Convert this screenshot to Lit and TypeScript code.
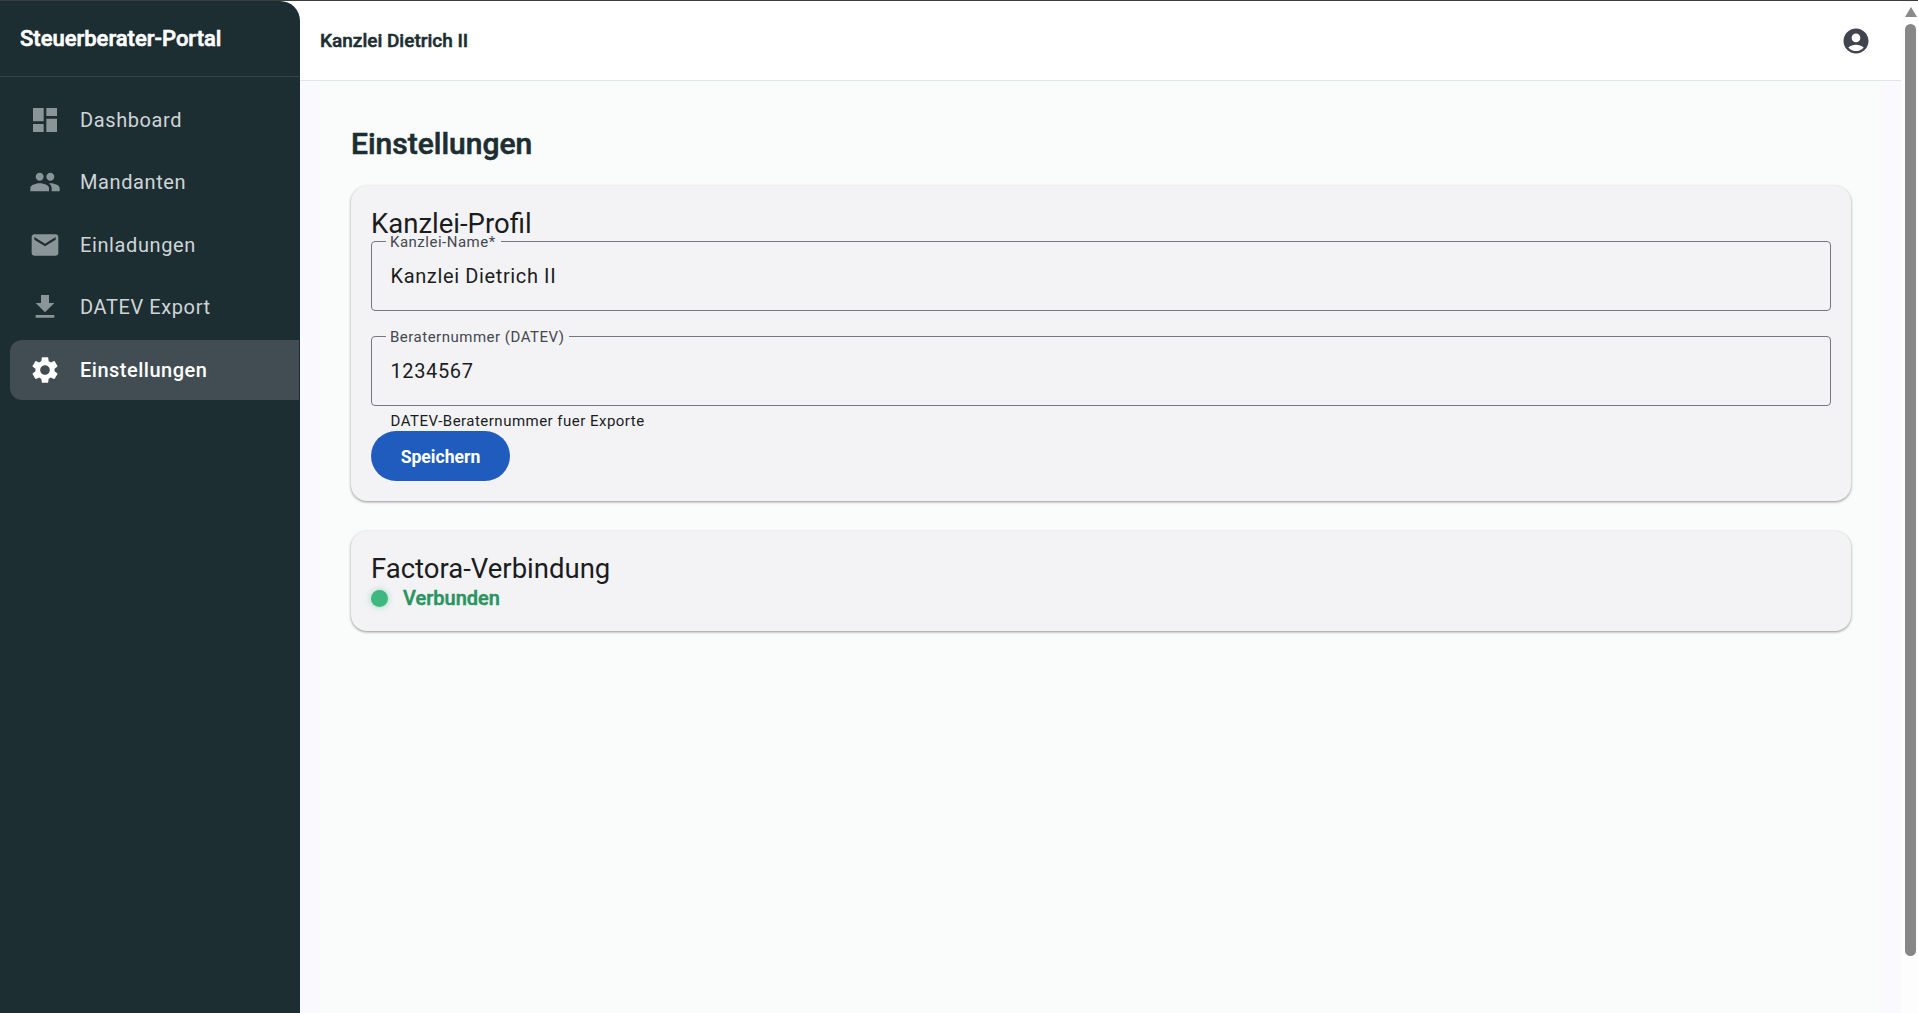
import { LitElement, html, css, svg } from "lit";
import { customElement } from "lit/decorators.js";

const icons: Record<string, string> = {
  dashboard: "M3 13h8V3H3v10zm0 8h8v-6H3v6zm10 0h8V11h-8v10zm0-18v6h8V3h-8z",
  people: "M16 11c1.66 0 2.99-1.34 2.99-3S17.66 5 16 5c-1.66 0-3 1.34-3 3s1.34 3 3 3zm-8 0c1.66 0 2.99-1.34 2.99-3S9.66 5 8 5C6.34 5 5 6.34 5 8s1.34 3 3 3zm0 2c-2.33 0-7 1.17-7 3.5V19h14v-2.5c0-2.33-4.67-3.5-7-3.5zm8 0c-.29 0-.62.02-.97.05 1.16.84 1.97 1.97 1.97 3.45V19h6v-2.5c0-2.33-4.67-3.5-7-3.5z",
  mail: "M20 4H4c-1.1 0-1.99.9-1.99 2L2 18c0 1.1.9 2 2 2h16c1.1 0 2-.9 2-2V6c0-1.1-.9-2-2-2zm0 4l-8 5-8-5V6l8 5 8-5v2z",
  download: "M19 9h-4V3H9v6H5l7 7 7-7zM5 18v2h14v-2H5z",
  settings: "M19.14 12.94c.04-.3.06-.61.06-.94 0-.32-.02-.64-.07-.94l2.03-1.58c.18-.14.23-.41.12-.61l-1.92-3.32c-.12-.22-.37-.29-.59-.22l-2.39.96c-.5-.38-1.03-.7-1.62-.94l-.36-2.54c-.04-.24-.24-.41-.48-.41h-3.84c-.24 0-.43.17-.47.41l-.36 2.54c-.59.24-1.13.57-1.62.94l-2.39-.96c-.22-.08-.47 0-.59.22L2.74 8.87c-.12.21-.08.47.12.61l2.03 1.58c-.05.3-.09.63-.09.94s.02.64.07.94l-2.03 1.58c-.18.14-.23.41-.12.61l1.92 3.32c.12.22.37.29.59.22l2.39-.96c.5.38 1.03.7 1.62.94l.36 2.54c.05.24.24.41.48.41h3.84c.24 0 .44-.17.47-.41l.36-2.54c.59-.24 1.13-.56 1.62-.94l2.39.96c.22.08.47 0 .59-.22l1.92-3.32c.12-.22.07-.47-.12-.61l-2.01-1.58zM12 15.6c-1.98 0-3.6-1.62-3.6-3.6s1.62-3.6 3.6-3.6 3.6 1.62 3.6 3.6-1.62 3.6-3.6 3.6z",
  account: "M12 2C6.48 2 2 6.48 2 12s4.48 10 10 10 10-4.48 10-10S17.52 2 12 2zm0 4c1.93 0 3.5 1.57 3.5 3.5S13.93 13 12 13s-3.5-1.57-3.5-3.5S10.07 6 12 6zm0 14c-2.03 0-4.43-.82-6.14-2.88C7.55 15.8 9.68 15 12 15s4.45.8 6.14 2.12C16.43 19.18 14.03 20 12 20z",
};

const icon = (name: string) => svg`<svg viewBox="0 0 24 24"><path d=${icons[name]}></path></svg>`;

@customElement("app-root")
export class AppRoot extends LitElement {
  static styles = css`
    :host { display: block; font-family: Roboto, "Liberation Sans", sans-serif; }
    * { box-sizing: border-box; }
    .page { height: 1013px; display: flex; flex-direction: column; overflow: hidden; background: #fff; }
    .topline { height: 1px; background: #3c3c3c; flex: none; }
    .frame { flex: 1; display: flex; min-height: 0; }
    .sidebar { width: 300px; flex: none; background: #1d2e33; border-top-right-radius: 20px; display: flex; flex-direction: column; }
    .brand { height: 76px; flex: none; border-bottom: 1px solid #33444a; padding-left: 20px; display: flex; align-items: center; color: #fff; font-size: 22px; font-weight: 500; -webkit-text-stroke: 0.6px #fff; }
    nav { display: flex; flex-direction: column; gap: 2.6px; padding-top: 12.5px; padding-left: 10px; }
    .item { height: 60px; display: flex; align-items: center; color: #cfd5d7; font-size: 20px; letter-spacing: 0.6px; border-radius: 12px 0 0 12px; padding-left: 19px; }
    .item svg { width: 32px; height: 32px; fill: #8a9598; flex: none; margin-right: 19px; }
    .item.active { background: #414d52; color: #fff; font-weight: 500; letter-spacing: 0.5px; margin-right: 1px; }
    .item.active svg { fill: #fff; }
    .main { flex: 1; min-width: 0; display: flex; flex-direction: column; background: #f9f9fe; }
    header { height: 80px; flex: none; background: #fff; border-bottom: 1px solid #dfe6ea; display: flex; align-items: center; justify-content: space-between; padding: 0 30px 0 20px; font-size: 19px; font-weight: 500; -webkit-text-stroke: 0.5px #1d2e33; color: #1d2e33; }
    header svg { width: 30px; height: 30px; fill: #3f444d; display: block; -webkit-text-stroke: 0; }
    .content { flex: 1; margin: 0 20px; background: #fafcfc; padding: 44px 30px 0 31px; display: flex; flex-direction: column; }
    h1 { margin: 0; font-size: 30px; line-height: 38px; font-weight: 500; -webkit-text-stroke: 0.6px #1d2e33; color: #1d2e33; }
    .card { background: #f3f3f6; border-radius: 16px; box-shadow: 0 1px 3px rgba(0,0,0,.35), 0 1px 2px rgba(0,0,0,.1); padding: 20px; }
    .card.profile { margin-top: 23px; height: 315px; }
    .card.factora { margin-top: 30px; height: 100px; }
    h2 { margin: 0; font-size: 27.5px; line-height: 34px; font-weight: 400; color: #1a1c1e; }
    .profile h2 { margin-top: 1px; }
    .factora h2 { margin-top: 1px; line-height: 33px; }
    .field { position: relative; height: 70px; border: 1px solid #74777f; border-radius: 4px; display: flex; align-items: center; padding: 0 18.5px; font-size: 20px; letter-spacing: 0.63px; color: #1a1c1e; }
    .field + .field { margin-top: 25px; }
    .label { position: absolute; left: 14px; top: -9.5px; background: #f3f3f6; padding: 0 5px 0 4px; line-height: 18px; font-size: 15px; letter-spacing: 0.5px; color: #44474f; }
    .help { font-size: 15px; line-height: 24px; letter-spacing: 0.48px; color: #1a1c1e; padding-left: 19.5px; margin-top: 3px; }
    button { display: block; width: 139px; height: 50px; border: 0; border-radius: 25px; background: #205cbe; color: #fff; font: 700 17.6px Roboto, sans-serif; padding: 1px 0 0; margin-top: -2px; }
    .status { display: flex; align-items: center; gap: 15px; color: #2a9460; font-size: 20px; font-weight: 500; -webkit-text-stroke: 0.5px #2a9460; line-height: 26px; }
    .dot { width: 17px; height: 17px; border-radius: 50%; background: #3eb87e; box-shadow: 0 0 6px rgba(62,184,126,.5); }
    .scrollbar { width: 17px; flex: none; background: #fdfdfd; display: flex; flex-direction: column; align-items: center; }
    .arrow { width: 0; height: 0; border-left: 6.5px solid transparent; border-right: 6.5px solid transparent; border-bottom: 10px solid #8a8a8a; margin-top: 6px; margin-left: 2px; }
    .thumb { width: 11px; height: 932px; border-radius: 5.5px; background: #878787; margin-top: 7px; margin-left: 2px; }
  `;

  render() {
    const items = [
      ["dashboard", "Dashboard"],
      ["people", "Mandanten"],
      ["mail", "Einladungen"],
      ["download", "DATEV Export"],
      ["settings", "Einstellungen"],
    ];
    return html`
      <div class="page">
        <div class="topline"></div>
        <div class="frame">
          <aside class="sidebar">
            <div class="brand">Steuerberater-Portal</div>
            <nav>
              ${items.map(([i, t]) => html`<div class="item ${t === "Einstellungen" ? "active" : ""}">${icon(i)}<span>${t}</span></div>`)}
            </nav>
          </aside>
          <div class="main">
            <header><span>Kanzlei Dietrich II</span>${icon("account")}</header>
            <div class="content">
              <h1>Einstellungen</h1>
              <section class="card profile">
                <h2>Kanzlei-Profil</h2>
                <div class="field"><span class="label">Kanzlei-Name*</span>Kanzlei Dietrich II</div>
                <div class="field"><span class="label">Beraternummer (DATEV)</span>1234567</div>
                <div class="help">DATEV-Beraternummer fuer Exporte</div>
                <button>Speichern</button>
              </section>
              <section class="card factora">
                <h2>Factora-Verbindung</h2>
                <div class="status"><span class="dot"></span>Verbunden</div>
              </section>
            </div>
          </div>
          <div class="scrollbar"><div class="arrow"></div><div class="thumb"></div></div>
        </div>
      </div>
    `;
  }
}
